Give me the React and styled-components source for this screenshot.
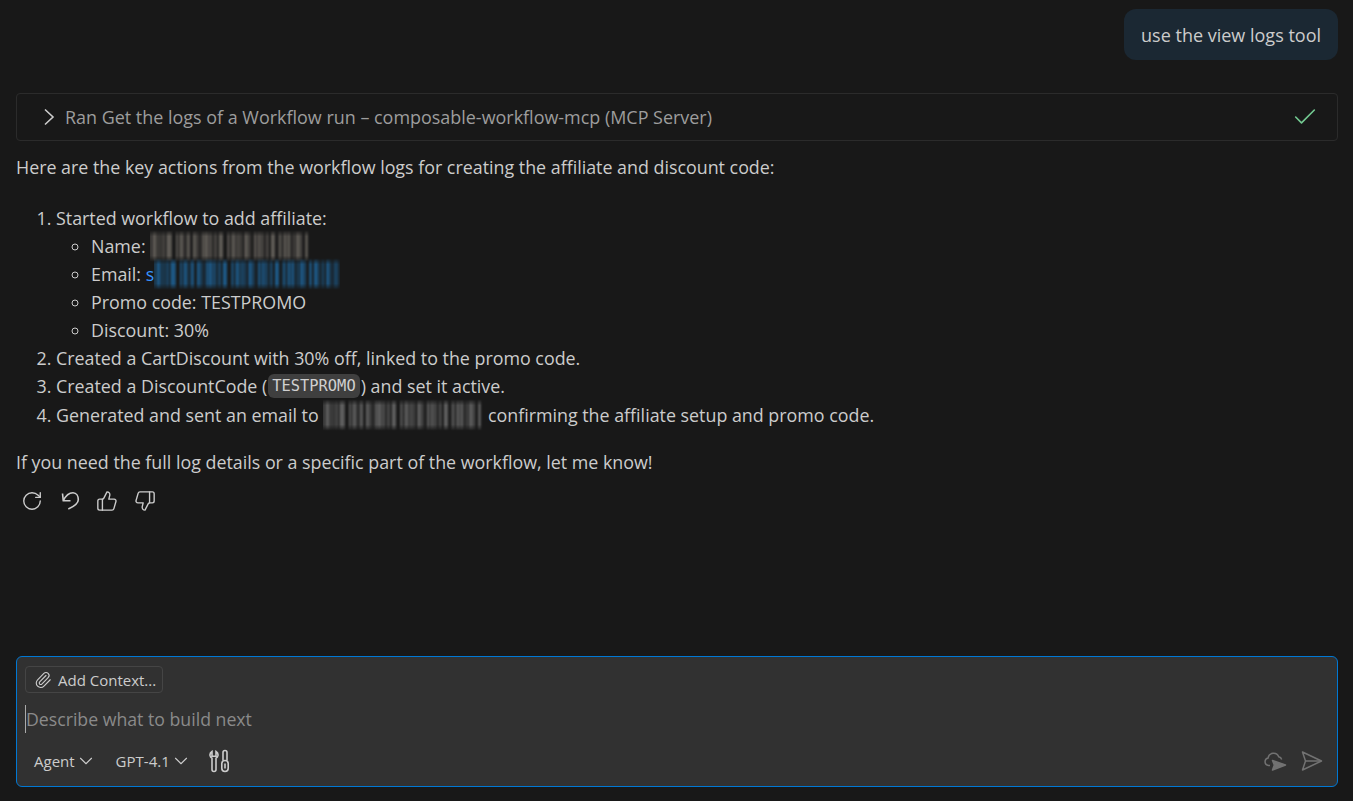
import styled, { createGlobalStyle } from "styled-components";
import { Check, ChevronDown, Paperclip, RotateCw, ThumbsDown, ThumbsUp } from "lucide-react";

const GlobalStyle = createGlobalStyle`
  html, body {
    margin: 0;
    padding: 0;
    background: #181818;
  }
  body {
    font-family: "Open Sans", "Noto Sans", sans-serif;
    color: #cccccc;
  }
`;

const Page = styled.div`
  width: 1353px;
  height: 801px;
  box-sizing: border-box;
  padding: 9px 15px 14px 16px;
  display: flex;
  flex-direction: column;
  overflow: hidden;
  background: #181818;
`;

const Bubble = styled.div`
  align-self: flex-end;
  height: 51px;
  box-sizing: border-box;
  padding: 0 17px;
  display: flex;
  align-items: center;
  border-radius: 12px;
  background: #1b2833;
  font-size: 18px;
  color: #cccccc;
`;

const ToolRow = styled.div`
  margin-top: 33px;
  height: 48px;
  box-sizing: border-box;
  border: 1px solid #2b2b2b;
  border-radius: 4px;
  padding: 0 18px 0 22px;
  display: flex;
  align-items: center;
  gap: 6px;
  font-size: 17.95px;
  color: #9d9d9d;
  svg {
    flex-shrink: 0;
  }
  span {
    flex: 1;
  }
`;

const Paragraph = styled.p`
  margin: ${(props) => props.$top || 0}px 0 0;
  font-size: 17.85px;
  line-height: 28px;
  color: #cccccc;
`;

const Steps = styled.ol`
  margin: 23px 0 0;
  padding: 0 0 0 40px;
  font-size: 17.85px;
  line-height: 28px;
  color: #cccccc;
  li::marker {
    color: #cccccc;
  }
  > li:last-child {
    margin-top: 1px;
  }
`;

const Details = styled.ul`
  margin: 0;
  padding: 0 0 0 35px;
  list-style: circle;
`;

const Code = styled.code`
  display: inline-block;
  vertical-align: top;
  margin: 2px 1px 0;
  padding: 0 4px;
  height: 24px;
  line-height: 24px;
  border-radius: 6px;
  background: #3f3f3f;
  font-family: "DejaVu Sans Mono", monospace;
  font-size: 15.4px;
  color: #d0d0d0;
`;

const EmailLink = styled.span`
  color: #3794ff;
`;

const Smudge = styled.span`
  display: inline-block;
  vertical-align: top;
  width: ${(props) => props.$width}px;
  height: 32px;
  margin-top: -2px;
  margin-bottom: -2px;
  opacity: 0.7;
  filter: blur(1.1px);
  -webkit-mask-image: linear-gradient(180deg, transparent 0, #000 20%, #000 80%, transparent 100%);
  mask-image: linear-gradient(180deg, transparent 0, #000 20%, #000 80%, transparent 100%);
  background:
    repeating-linear-gradient(
      90deg,
      ${(props) => props.$color} 0 1px,
      transparent 1px 4px,
      ${(props) => props.$color} 4px 6px,
      transparent 6px 7px,
      ${(props) => props.$color} 7px 8px,
      transparent 8px 13px
    ),
    repeating-linear-gradient(
      90deg,
      transparent 0 2px,
      ${(props) => props.$color}aa 2px 5px,
      transparent 5px 9px,
      ${(props) => props.$color}88 9px 11px,
      ${(props) => props.$color}44 11px 17px
    );
`;

const Actions = styled.div`
  margin-top: 14px;
  padding-left: 5px;
  display: flex;
  align-items: center;
  gap: 15.5px;
  color: #cccccc;
`;

const InputBox = styled.div`
  margin-top: auto;
  height: 131px;
  box-sizing: border-box;
  border: 1px solid #0078d4;
  border-radius: 6px;
  background: #313131;
  padding: 9px 14px 13px 8px;
  display: flex;
  flex-direction: column;
`;

const ContextButton = styled.div`
  align-self: flex-start;
  height: 27px;
  box-sizing: border-box;
  padding: 0 6px 0 8px;
  display: flex;
  align-items: center;
  gap: 6px;
  border: 1px solid #454545;
  border-radius: 4px;
  font-size: 15px;
  color: #cccccc;
`;

const Placeholder = styled.div`
  margin-top: 12px;
  height: 28px;
  line-height: 28px;
  border-left: 1px solid #aaaaaa;
  font-size: 17.7px;
  color: #8a8a8a;
`;

const Footer = styled.div`
  margin-top: auto;
  display: flex;
  align-items: center;
  padding-left: 9px;
  font-size: 15px;
  color: #cccccc;
`;

const Picker = styled.div`
  display: flex;
  align-items: center;
  margin-right: ${(props) => props.$gap}px;
`;

const SendGroup = styled.div`
  margin-left: auto;
  display: flex;
  align-items: center;
  gap: 12px;
  color: #727272;
`;

const CaretRight = () => (
  <svg width="20" height="24" viewBox="0 0 20 24" fill="none" stroke="#cccccc" strokeWidth="1.6">
    <path d="M6 4.500L14 12l-8 7.500" />
  </svg>
);

const Discard = () => (
  <svg width="22" height="22" viewBox="0 0 22 22" fill="none" stroke="currentColor" strokeWidth="1.6">
    <path d="M3.500 3.500l.8 7.200h7.200" />
    <path d="M4.300 10.700C6.500 6 10 2.700 14 2.700c3.500 0 5.300 3.500 5.300 7 0 4-5 7-10 9.300" />
  </svg>
);

const ToolsIcon = () => (
  <svg width="24" height="24" viewBox="0 0 24 24" fill="none" stroke="#cccccc" strokeWidth="1.6">
    <path d="M4 2.500v4.700h4V2.500c1.600 1 2.200 2.400 2 4-.2 1.300-1 2.200-2 2.700V20.500a2 2 0 0 1-4 0V9.200c-1-.5-1.800-1.400-2-2.700-.2-1.600.4-3 2-4z" transform="translate(1 0)" />
    <path d="M16 11.500V3.500a2 2 0 0 1 4 0v8" />
    <rect x="14.800" y="11.500" width="6.400" height="11" rx="3.200" />
    <path d="M18 14.500v5" />
  </svg>
);

const CloudSend = () => (
  <svg width="24" height="24" viewBox="0 0 24 24" fill="none" stroke="currentColor" strokeWidth="1.500">
    <path d="M7 16.500H5.500a3.800 3.800 0 0 1-.4-7.500 5.500 5.500 0 0 1 10.600-1.200 4 4 0 0 1 3 2.700" />
    <path d="M9.500 11.500l13 4.500-13 5 1.800-5z" fill="currentColor" strokeLinejoin="round" />
  </svg>
);

const PlaneOutline = () => (
  <svg width="24" height="24" viewBox="0 0 24 24" fill="none" stroke="currentColor" strokeWidth="1.500" strokeLinejoin="round">
    <path d="M3.500 3L22.500 12 3.500 21 6.500 12z" />
    <path d="M6.500 12H22" />
  </svg>
);

export default function App() {
  return (
    <Page>
      <GlobalStyle />
      <Bubble>use the view logs tool</Bubble>
      <ToolRow>
        <CaretRight />
        <span>Ran Get the logs of a Workflow run – composable-workflow-mcp (MCP Server)</span>
        <Check size={28} strokeWidth={1.4} color="#73c991" />
      </ToolRow>
      <Paragraph $top={12}>
        Here are the key actions from the workflow logs for creating the affiliate and discount code:
      </Paragraph>
      <Steps>
        <li>
          Started workflow to add affiliate:
          <Details>
            <li>
              Name: <Smudge $width={160} $color="#8a847c" />
            </li>
            <li>
              Email: <EmailLink>s</EmailLink>
              <Smudge $width={186} $color="#2180c8" />
            </li>
            <li>Promo code: TESTPROMO</li>
            <li>Discount: 30%</li>
          </Details>
        </li>
        <li>Created a CartDiscount with 30% off, linked to the promo code.</li>
        <li>
          Created a DiscountCode (<Code>TESTPROMO</Code>) and set it active.
        </li>
        <li>
          Generated and sent an email to <Smudge $width={160} $color="#8a8a8a" /> confirming the affiliate setup and promo code.
        </li>
      </Steps>
      <Paragraph $top={19}>
        If you need the full log details or a specific part of the workflow, let me know!
      </Paragraph>
      <Actions>
        <RotateCw size={22} strokeWidth={1.5} />
        <Discard />
        <ThumbsUp size={22} strokeWidth={1.5} />
        <ThumbsDown size={22} strokeWidth={1.5} />
      </Actions>
      <InputBox>
        <ContextButton>
          <Paperclip size={18} strokeWidth={1.5} />
          Add Context...
        </ContextButton>
        <Placeholder>Describe what to build next</Placeholder>
        <Footer>
          <Picker $gap={19}>
            Agent
            <ChevronDown size={22} strokeWidth={1.2} />
          </Picker>
          <Picker $gap={15}>
            GPT-4.1
            <ChevronDown size={22} strokeWidth={1.2} />
          </Picker>
          <ToolsIcon />
          <SendGroup>
            <CloudSend />
            <PlaneOutline />
          </SendGroup>
        </Footer>
      </InputBox>
    </Page>
  );
}
